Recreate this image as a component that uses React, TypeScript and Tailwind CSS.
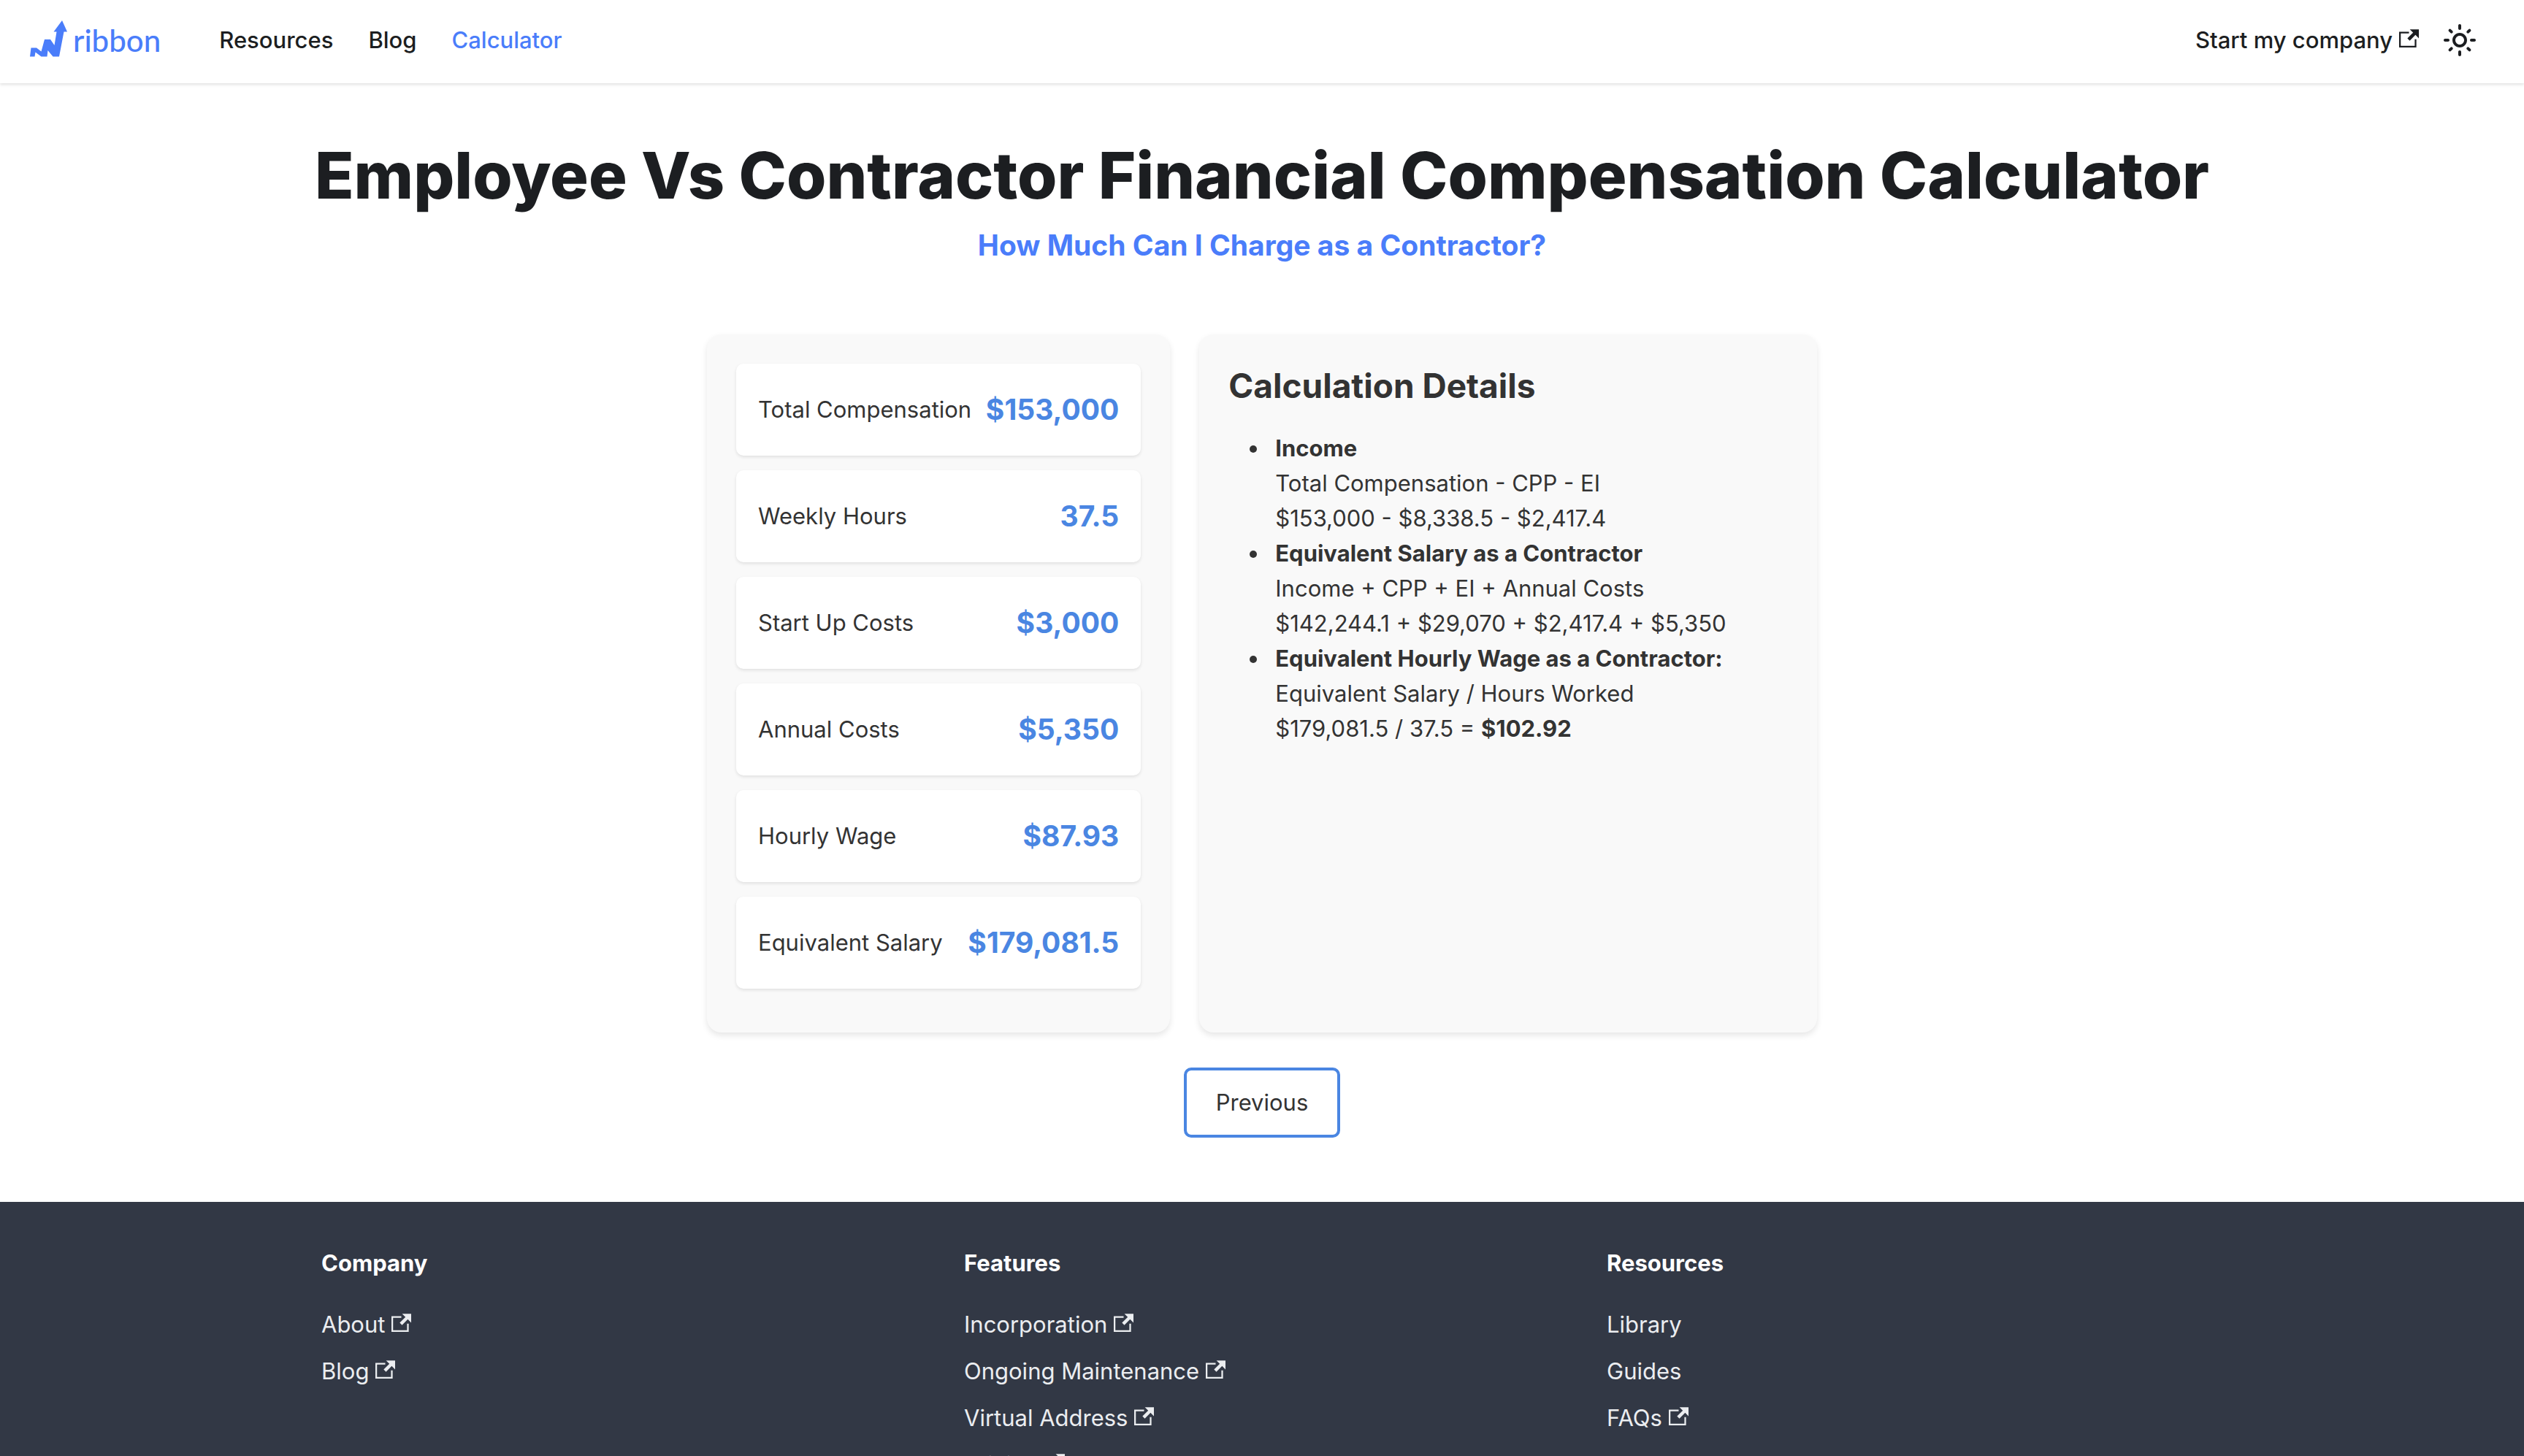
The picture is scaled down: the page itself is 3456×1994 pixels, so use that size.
import React from "react";

type LinkItem = { label: string; external?: boolean };

const results = [
  { label: "Total Compensation", value: "$153,000" },
  { label: "Weekly Hours", value: "37.5" },
  { label: "Start Up Costs", value: "$3,000" },
  { label: "Annual Costs", value: "$5,350" },
  { label: "Hourly Wage", value: "$87.93" },
  { label: "Equivalent Salary", value: "$179,081.5" },
];

const footerColumns: { title: string; links: LinkItem[] }[] = [
  {
    title: "Company",
    links: [
      { label: "About", external: true },
      { label: "Blog", external: true },
    ],
  },
  {
    title: "Features",
    links: [
      { label: "Incorporation", external: true },
      { label: "Ongoing Maintenance", external: true },
      { label: "Virtual Address", external: true },
      { label: "Pricing", external: true },
    ],
  },
  {
    title: "Resources",
    links: [
      { label: "Library" },
      { label: "Guides" },
      { label: "FAQs", external: true },
    ],
  },
];

function ExternalIcon() {
  return (
    <svg className="ml-[9px] inline size-[27px] align-baseline" viewBox="0 0 24 24" fill="currentColor" aria-hidden="true">
      <path d="M21 13v10h-21v-19h12v2h-10v15h17v-8h2zm3-12h-10.988l4.035 4-6.977 7.07 2.828 2.828 6.977-7.07 4.125 4.172v-11z" />
    </svg>
  );
}

function SunIcon() {
  return (
    <svg className="size-12" viewBox="0 0 24 24" fill="currentColor" aria-hidden="true">
      <path d="M12,9c1.65,0,3,1.35,3,3s-1.35,3-3,3s-3-1.35-3-3S10.35,9,12,9 M12,7c-2.76,0-5,2.24-5,5s2.24,5,5,5s5-2.24,5-5 S14.76,7,12,7L12,7z M2,13l2,0c0.55,0,1-0.45,1-1s-0.45-1-1-1l-2,0c-0.55,0-1,0.45-1,1S1.45,13,2,13z M20,13l2,0c0.55,0,1-0.45,1-1 s-0.45-1-1-1l-2,0c-0.55,0-1,0.45-1,1S19.45,13,20,13z M11,2v2c0,0.55,0.45,1,1,1s1-0.45,1-1V2c0-0.55-0.45-1-1-1S11,1.45,11,2z M11,20v2c0,0.55,0.45,1,1,1s1-0.45,1-1v-2c0-0.55-0.45-1-1-1C11.45,19,11,19.45,11,20z M5.99,4.58c-0.39-0.39-1.03-0.39-1.41,0 c-0.39,0.39-0.39,1.03,0,1.41l1.06,1.06c0.39,0.39,1.03,0.39,1.41,0s0.39-1.03,0-1.41L5.99,4.58z M18.36,16.95 c-0.39-0.39-1.03-0.39-1.41,0c-0.39,0.39-0.39,1.03,0,1.41l1.06,1.06c0.39,0.39,1.03,0.39,1.41,0c0.39-0.39,0.39-1.03,0-1.41 L18.36,16.95z M19.42,5.99c0.39-0.39,0.39-1.03,0-1.41c-0.39-0.39-1.03-0.39-1.41,0l-1.06,1.06c-0.39,0.39-0.39,1.03,0,1.41 s1.03,0.39,1.41,0L19.42,5.99z M7.05,18.36c0.39-0.39,0.39-1.03,0-1.41c-0.39-0.39-1.03-0.39-1.41,0l-1.06,1.06 c-0.39,0.39-0.39,1.03,0,1.41s1.03,0.39,1.41,0L7.05,18.36z" />
    </svg>
  );
}

function Logo() {
  return (
    <a href="#" className="flex items-center gap-2 text-[#4a7dfa]">
      <svg className="mb-1 h-[50px] w-[52px]" viewBox="-1 0 52 50" fill="currentColor" aria-hidden="true">
        <path d="M0 49.5 L1.5 37.5 H9 L15.5 42.5 L20 26 H28 L33.5 34 L36.5 15.5 H32.5 L44 0 L51 15.5 H46.5 L40 49.5 H31.5 L24.5 41 L23.5 49.5 H15.5 L7.5 43.5 L6.5 49.5 Z" />
      </svg>
      <span className="text-[42px] leading-none" style={{ fontFamily: "Lato, sans-serif" }}>ribbon</span>
    </a>
  );
}

function Navbar() {
  return (
    <header className="flex h-[114px] items-center justify-between bg-white px-10 pb-1 font-medium shadow-[0_2px_4px_rgba(0,0,0,0.12)]">
      <nav className="flex items-center" aria-label="Main">
        <Logo />
        <div className="ml-20 flex gap-12">
          <a href="#">Resources</a>
          <a href="#">Blog</a>
          <a href="#" className="text-[#4a7dfa]">Calculator</a>
        </div>
      </nav>
      <div className="flex items-center gap-8 pr-6">
        <a href="#">Start my company<ExternalIcon /></a>
        <button type="button" aria-label="Switch colour mode"><SunIcon /></button>
      </div>
    </header>
  );
}

export default function App() {
  return (
    <div className="bg-white text-[31px] leading-[48px] text-[#1c1e21]" style={{ fontFamily: 'Inter, "Liberation Sans", sans-serif' }}>
      <Navbar />
      <main className="pb-[88px] pt-[70px] text-[#333]">
        <h1 className="text-center text-[88px] font-extrabold leading-[112px] text-[#1c1e21]">
          Employee Vs Contractor Financial Compensation Calculator
        </h1>
        <h2 className="mt-4 text-center text-[39px] font-bold leading-[48px] text-[#4a7dfa]">
          How Much Can I Charge as a Contractor?
        </h2>
        <div className="mx-auto mt-[98px] grid max-w-[1520px] grid-cols-[3fr_4fr] gap-10">
          <section className="rounded-[20px] bg-[#f9f9f9] p-10 pb-[60px] shadow-[0_4px_8px_rgba(0,0,0,0.1)]">
            <dl className="flex flex-col gap-5">
              {results.map((r) => (
                <div key={r.label} className="flex h-[126px] items-center justify-between whitespace-nowrap rounded-[10px] bg-white px-[30px] shadow-[0_2px_4px_rgba(0,0,0,0.1)]">
                  <dt>{r.label}</dt>
                  <dd className="text-[39px] font-bold text-[#4a86e2]">{r.value}</dd>
                </div>
              ))}
            </dl>
          </section>
          <section className="rounded-[20px] bg-[#f9f9f9] p-10 shadow-[0_4px_8px_rgba(0,0,0,0.1)]">
            <h3 className="text-[46px] font-bold leading-[60px]">Calculation Details</h3>
            <ul className="mt-8 list-disc pl-14 [&>li]:pl-2">
              <li>
                <strong>Income</strong>
                <p>Total Compensation - CPP - EI</p>
                <p>$153,000 - $8,338.5 - $2,417.4</p>
              </li>
              <li>
                <strong>Equivalent Salary as a Contractor</strong>
                <p>Income + CPP + EI + Annual Costs</p>
                <p>$142,244.1 + $29,070 + $2,417.4 + $5,350</p>
              </li>
              <li>
                <strong>Equivalent Hourly Wage as a Contractor:</strong>
                <p>Equivalent Salary / Hours Worked</p>
                <p>$179,081.5 / 37.5 = <strong>$102.92</strong></p>
              </li>
            </ul>
          </section>
        </div>
        <div className="mt-12 flex justify-center">
          <button type="button" className="h-24 rounded-[10px] border-4 border-[#4a86e2] bg-white px-10">Previous</button>
        </div>
      </main>
      <footer className="bg-[#323845] pb-16 pt-16">
        <div className="mx-auto grid max-w-[2640px] grid-cols-3">
          {footerColumns.map((col) => (
            <div key={col.title} className="px-8">
              <h4 className="font-bold leading-[40px] text-white">{col.title}</h4>
              <ul className="mt-8 leading-[64px] text-[#ebedf0]">
                {col.links.map((l) => (
                  <li key={l.label}>
                    <a href="#">{l.label}{l.external && <ExternalIcon />}</a>
                  </li>
                ))}
              </ul>
            </div>
          ))}
        </div>
      </footer>
    </div>
  );
}
